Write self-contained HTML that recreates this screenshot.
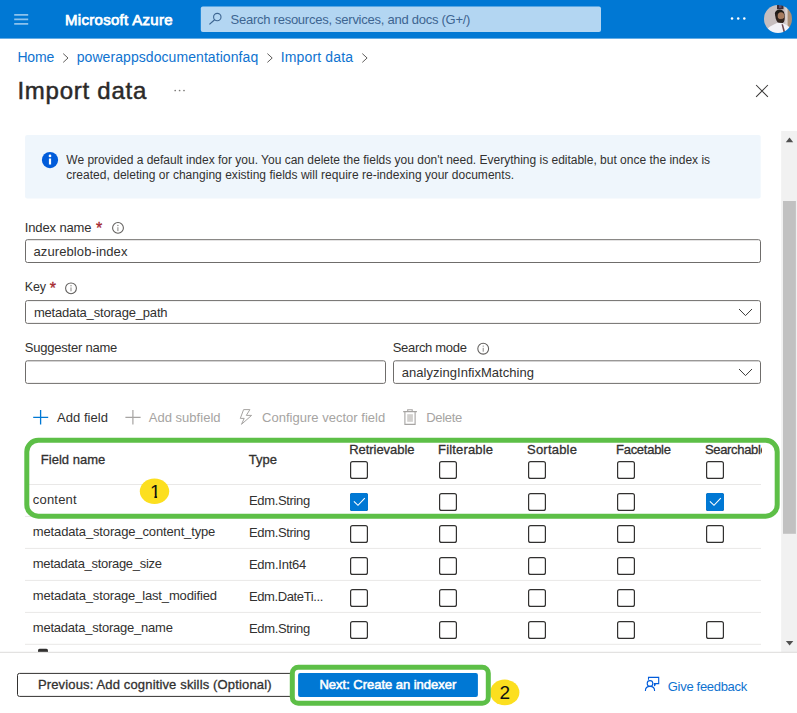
<!DOCTYPE html>
<html><head><meta charset="utf-8"><title>Import data - Microsoft Azure</title>
<style>
html,body{margin:0;padding:0;}
body{width:797px;height:713px;position:relative;overflow:hidden;background:#fff;font-family:"Liberation Sans",sans-serif;color:#323130;font-size:13px;}
.a{position:absolute;white-space:nowrap;line-height:1;}
.sb{-webkit-text-stroke:0.45px currentColor;}
svg{position:absolute;left:0;top:0;}
</style></head><body>

<!-- table row separators + partial next row -->
<svg width="797" height="713" viewBox="0 0 797 713">
<g stroke="#e9e8e7" stroke-width="1">
<path d="M25 484.5H761M25 516.4H761M25 548.4H761M25 580.4H761M25 612.4H761M25 644.3H761"/>
</g>
<path d="M38 652v-1.6q0-1.6 1.6-1.6h6.8q1.6 0 1.6 1.6v1.6z" fill="#323130"/>
</svg>

<!-- footer background -->
<div class="a" style="left:0;top:652px;width:797px;height:61px;background:#fff;"></div>

<svg width="797" height="713" viewBox="0 0 797 713">
<!-- top bar -->
<rect x="0" y="0" width="797" height="38.6" fill="#0078d4"/>
<path d="M14.2 14.8H28.2M14.2 19.3H28.2M14.2 23.8H28.2" stroke="#fff" stroke-width="1.8" opacity="0.55" fill="none"/>
<rect x="200.8" y="6.5" width="400.2" height="25.5" rx="2" fill="#b3d6f2"/>
<circle cx="217.3" cy="17.1" r="3.7" stroke="#3d6591" stroke-width="1.1" fill="none"/>
<path d="M214.6 19.8L209.4 24.4" stroke="#3d6591" stroke-width="1.2"/>
<g fill="#fff"><circle cx="732" cy="18.500" r="1.250"/><circle cx="738.200" cy="18.500" r="1.250"/><circle cx="744.300" cy="18.500" r="1.250"/></g>
<!-- avatar -->
<defs><clipPath id="av"><circle cx="778" cy="19" r="14"/></clipPath>
<filter id="bl" x="-10%" y="-10%" width="120%" height="120%"><feGaussianBlur stdDeviation="0.7"/></filter></defs>
<g clip-path="url(#av)"><g filter="url(#bl)">
<rect x="762" y="3" width="32" height="32" fill="#c6bebf"/>
<rect x="785.300" y="3" width="2.700" height="32" fill="#ddd3cf"/>
<rect x="787.600" y="3" width="6" height="32" fill="#a98f76"/>
<rect x="777" y="4" width="6.500" height="5.200" fill="#3a2b31"/>
<rect x="779" y="5" width="2.500" height="3" fill="#5a5070"/>
<path d="M765 34c1-5.500 5-8 12.500-11.300l6 .8c4.500 2 8 4.500 9.500 10.500z" fill="#f2f2f7"/>
<ellipse cx="779.600" cy="13.600" rx="4.700" ry="4.200" fill="#1f1a19"/>
<path d="M775.200 13.500c-.3 3.500.8 7 2.600 9l5.200 .6c1.600-1.700 2-5 1.500-9z" fill="#2a211f"/>
<ellipse cx="781" cy="16" rx="3.300" ry="3.800" fill="#a67c5e"/>
<path d="M777.300 17.500c1.800 2 4.800 2.200 7 .3l-.2 3.400c-1.800 2-4.600 1.900-6.400-.3z" fill="#33261f" opacity=".9"/>
<path d="M781.500 24.300l1.500 0 2.100 7.400-1.500 1z" fill="#6b4850"/>
</g></g>

<!-- breadcrumb chevrons -->
<g stroke="#605e5c" stroke-width="1" fill="none">
<path d="M63.2 53.6L68 58L63.2 62.4"/><path d="M267.4 53.6L272.2 58L267.4 62.4"/><path d="M362.3 53.6L367.1 58L362.3 62.4"/>
</g>
<!-- title dots, close -->
<g fill="#7a7876"><circle cx="175.2" cy="90.5" r="0.85"/><circle cx="179.6" cy="90.5" r="0.85"/><circle cx="184" cy="90.5" r="0.85"/></g>
<path d="M756.100 85L767.900 96.900M767.900 85L756.100 96.900" stroke="#3b3a39" stroke-width="1.050" fill="none"/>

<!-- scrollbar -->
<rect x="781.2" y="131" width="15.8" height="521" fill="#f1f1f1"/>
<rect x="783" y="201" width="12.9" height="332.8" fill="#c1c1c1"/>
<path d="M785.8 142.2L789.5 137.4L793.2 142.2z" fill="#505050"/>
<path d="M785.9 641L789.6 645.6L793.3 641z" fill="#505050"/>

<!-- info box -->
<rect x="25.1" y="135.1" width="735.6" height="63.5" rx="2" fill="#eff6fc"/>
<circle cx="50" cy="160.1" r="8.1" fill="#015cda"/>
<rect x="48.9" y="158.5" width="2.2" height="6" fill="#fff"/><circle cx="50" cy="155.900" r="1.35" fill="#fff"/>

<!-- required stars & info icons -->
<g stroke="#605e5c" stroke-width="1.050" fill="none"><circle cx="118" cy="227.900" r="5.400"/><circle cx="71" cy="288.300" r="5.400"/><circle cx="483.200" cy="348.700" r="5.400"/></g>
<g fill="#8a8886">
<rect x="117.4" y="227.2" width="1" height="3.9"/><circle cx="117.9" cy="225.5" r="0.7"/>
<rect x="70.5" y="287.4" width="1" height="3.9"/><circle cx="71" cy="285.7" r="0.7"/>
<rect x="482.7" y="347.8" width="1" height="3.9"/><circle cx="483.2" cy="346.1" r="0.7"/>
</g>

<!-- inputs -->
<g stroke="#6f6d6b" stroke-width="1" fill="#fff">
<rect x="25.5" y="239.7" width="735" height="22.8" rx="2"/>
<rect x="25.5" y="300.6" width="735" height="22.8" rx="2"/>
<rect x="25.5" y="360.8" width="360" height="22.6" rx="2"/>
<rect x="393.5" y="360.8" width="367" height="22.6" rx="2"/>
</g>
<g stroke="#3b3a39" stroke-width="1" fill="none">
<path d="M739 309L745.5 315.6L752 309"/><path d="M739 369L745.5 375.6L752 369"/>
</g>

<!-- toolbar icons -->
<path d="M40.6 410V424.6M33.2 417.3H48.2" stroke="#0078d4" stroke-width="1.3" fill="none"/>
<path d="M132.9 410V424.6M125.4 417.3H140.6" stroke="#a6a4a2" stroke-width="1.2" fill="none"/>
<path d="M243.6 409.6H249.9L246.3 415.4H251.6L241.5 424.3L244.2 418.4H240.3Z" stroke="#a6a4a2" stroke-width="1" fill="none" stroke-linejoin="round"/>
<g stroke="#a6a4a2" stroke-width="1.1" fill="none">
<path d="M403.2 411.6H416.9M407.7 411.4V409.7H412.2V411.4M404.9 411.6V424.4H415.1V411.6"/>
</g>
<rect x="407.2" y="414.2" width="5.7" height="7.6" fill="#d2d0ce"/>
</svg>

<!-- checkboxes -->
<svg width="797" height="713" viewBox="0 0 797 713">
<!-- footer line -->
<path d="M0 652.3H797" stroke="#dcdbda" stroke-width="1"/>
<!-- previous button -->
<rect x="17.5" y="673.4" width="276" height="23" rx="2" fill="none" stroke="#323130" stroke-width="1"/>
<!-- next button -->
<rect x="285" y="660" width="212" height="50" fill="#fff"/>
<path d="M285 673.4H292M285 696.4H292" stroke="#323130" stroke-width="1"/>
<rect x="298.1" y="673.1" width="179.8" height="23.9" rx="2" fill="#0078d4"/>
<g stroke="#323130" stroke-width="1.2" fill="#fff">
<rect x="350.6" y="461.6" width="16.8" height="16.8" rx="2"/>
<rect x="439.6" y="461.6" width="16.8" height="16.8" rx="2"/>
<rect x="528.6" y="461.6" width="16.8" height="16.8" rx="2"/>
<rect x="617.6" y="461.6" width="16.8" height="16.8" rx="2"/>
<rect x="706.6" y="461.6" width="16.8" height="16.8" rx="2"/>
<rect x="350.6" y="493.6" width="16.8" height="16.8" rx="2"/>
<rect x="439.6" y="493.6" width="16.8" height="16.8" rx="2"/>
<rect x="528.6" y="493.6" width="16.8" height="16.8" rx="2"/>
<rect x="617.6" y="493.6" width="16.8" height="16.8" rx="2"/>
<rect x="706.6" y="493.6" width="16.8" height="16.8" rx="2"/>
<rect x="350.6" y="525.6" width="16.8" height="16.8" rx="2"/>
<rect x="439.6" y="525.6" width="16.8" height="16.8" rx="2"/>
<rect x="528.6" y="525.6" width="16.8" height="16.8" rx="2"/>
<rect x="617.6" y="525.6" width="16.8" height="16.8" rx="2"/>
<rect x="706.6" y="525.6" width="16.8" height="16.8" rx="2"/>
<rect x="350.6" y="557.6" width="16.8" height="16.8" rx="2"/>
<rect x="439.6" y="557.6" width="16.8" height="16.8" rx="2"/>
<rect x="528.6" y="557.6" width="16.8" height="16.8" rx="2"/>
<rect x="617.6" y="557.6" width="16.8" height="16.8" rx="2"/>
<rect x="350.6" y="589.6" width="16.8" height="16.8" rx="2"/>
<rect x="439.6" y="589.6" width="16.8" height="16.8" rx="2"/>
<rect x="528.6" y="589.6" width="16.8" height="16.8" rx="2"/>
<rect x="617.6" y="589.6" width="16.8" height="16.8" rx="2"/>
<rect x="350.6" y="621.6" width="16.8" height="16.8" rx="2"/>
<rect x="439.6" y="621.6" width="16.8" height="16.8" rx="2"/>
<rect x="528.6" y="621.6" width="16.8" height="16.8" rx="2"/>
<rect x="617.6" y="621.6" width="16.8" height="16.8" rx="2"/>
<rect x="706.6" y="621.6" width="16.8" height="16.8" rx="2"/>
</g>
<g fill="#0078d4"><rect x="350" y="493" width="18" height="18" rx="2"/><rect x="706" y="493" width="18" height="18" rx="2"/></g>
<g stroke="#fff" stroke-width="1.1" fill="none"><path d="M353.9 501.3L358 505.3L364.8 498.2"/><path d="M709.9 501.3L714 505.3L720.8 498.2"/></g>
</svg>

<div class="a" style="left:65.0px;top:12.3px;font-size:15px;color:#fff;letter-spacing:0.296px;-webkit-text-stroke:0.75px currentColor;">Microsoft Azure</div>
<div class="a" style="left:230.6px;top:12.8px;font-size:13px;color:#3d6591;letter-spacing:-0.256px;">Search resources, services, and docs (G+/)</div>
<div class="a" style="left:17.4px;top:49.7px;font-size:14px;color:#0f73d0;letter-spacing:-0.190px;">Home</div>
<div class="a" style="left:76.7px;top:49.7px;font-size:14px;color:#0f73d0;letter-spacing:0.071px;">powerappsdocumentationfaq</div>
<div class="a" style="left:280.7px;top:49.7px;font-size:14px;color:#0f73d0;letter-spacing:0.146px;">Import data</div>
<div class="a" style="left:17.4px;top:78.8px;font-size:24px;color:#2b2a29;letter-spacing:0.753px;-webkit-text-stroke:0.5px currentColor;">Import data</div>
<div class="a" style="left:66.3px;top:154.3px;font-size:12px;color:#323130;letter-spacing:-0.006px;">We provided a default index for you. You can delete the fields you don't need. Everything is editable, but once the index is</div>
<div class="a" style="left:66.3px;top:168.9px;font-size:12px;color:#323130;letter-spacing:0.025px;">created, deleting or changing existing fields will require re-indexing your documents.</div>
<div class="a" style="left:24.7px;top:221.0px;font-size:13px;color:#323130;letter-spacing:-0.120px;">Index name</div>
<div class="a" style="left:33.5px;top:244.5px;font-size:13px;color:#323130;letter-spacing:0.103px;">azureblob-index</div>
<div class="a" style="left:24.8px;top:281.2px;font-size:12.5px;color:#323130;letter-spacing:-0.155px;">Key</div>
<div class="a" style="left:33.9px;top:305.7px;font-size:13px;color:#323130;letter-spacing:-0.184px;">metadata_storage_path</div>
<div class="a" style="left:24.7px;top:341.3px;font-size:13px;color:#323130;letter-spacing:-0.212px;">Suggester name</div>
<div class="a" style="left:392.7px;top:341.3px;font-size:13px;color:#323130;letter-spacing:-0.307px;">Search mode</div>
<div class="a" style="left:401.8px;top:365.7px;font-size:13px;color:#323130;letter-spacing:0.030px;">analyzingInfixMatching</div>
<div class="a" style="left:57.0px;top:410.8px;font-size:13px;color:#323130;letter-spacing:0.045px;">Add field</div>
<div class="a" style="left:148.8px;top:410.8px;font-size:13px;color:#a6a4a2;letter-spacing:0.017px;">Add subfield</div>
<div class="a" style="left:262.1px;top:410.8px;font-size:13px;color:#a6a4a2;letter-spacing:0.015px;">Configure vector field</div>
<div class="a" style="left:426.2px;top:410.8px;font-size:13px;color:#a6a4a2;letter-spacing:-0.285px;">Delete</div>
<div class="a" style="left:40.8px;top:452.8px;font-size:13px;color:#323130;letter-spacing:0.016px;-webkit-text-stroke:0.3px currentColor;">Field name</div>
<div class="a" style="left:248.8px;top:452.8px;font-size:13px;color:#323130;letter-spacing:-0.011px;-webkit-text-stroke:0.3px currentColor;">Type</div>
<div class="a" style="left:349.3px;top:442.8px;font-size:13px;color:#323130;letter-spacing:-0.061px;-webkit-text-stroke:0.3px currentColor;">Retrievable</div>
<div class="a" style="left:438.1px;top:442.8px;font-size:13px;color:#323130;letter-spacing:0.154px;-webkit-text-stroke:0.3px currentColor;">Filterable</div>
<div class="a" style="left:527.0px;top:442.8px;font-size:13px;color:#323130;letter-spacing:0.219px;-webkit-text-stroke:0.3px currentColor;">Sortable</div>
<div class="a" style="left:616.0px;top:442.8px;font-size:13px;color:#323130;letter-spacing:-0.267px;-webkit-text-stroke:0.3px currentColor;">Facetable</div>
<div class="a" style="left:705.0px;top:442.8px;font-size:13px;color:#323130;letter-spacing:-0.336px;width:56.9px;overflow:hidden;-webkit-text-stroke:0.3px currentColor;">Searchable</div>
<div class="a" style="left:32.8px;top:492.5px;font-size:13px;color:#323130;letter-spacing:0.200px;">content</div>
<div class="a" style="left:248.9px;top:493.6px;font-size:13px;color:#323130;letter-spacing:-0.329px;">Edm.String</div>
<div class="a" style="left:32.8px;top:524.5px;font-size:13px;color:#323130;letter-spacing:-0.140px;">metadata_storage_content_type</div>
<div class="a" style="left:248.9px;top:525.6px;font-size:13px;color:#323130;letter-spacing:-0.329px;">Edm.String</div>
<div class="a" style="left:32.8px;top:556.5px;font-size:13px;color:#323130;letter-spacing:-0.300px;">metadata_storage_size</div>
<div class="a" style="left:248.9px;top:557.5px;font-size:13px;color:#323130;letter-spacing:-0.226px;">Edm.Int64</div>
<div class="a" style="left:32.8px;top:588.5px;font-size:13px;color:#323130;letter-spacing:-0.154px;">metadata_storage_last_modified</div>
<div class="a" style="left:248.9px;top:589.6px;font-size:13px;color:#323130;letter-spacing:-0.377px;">Edm.DateTi...</div>
<div class="a" style="left:32.8px;top:620.5px;font-size:13px;color:#323130;letter-spacing:-0.220px;">metadata_storage_name</div>
<div class="a" style="left:248.9px;top:621.8px;font-size:13px;color:#323130;letter-spacing:-0.329px;">Edm.String</div>
<div class="a" style="left:37.9px;top:677.7px;font-size:13px;color:#323130;letter-spacing:0.151px;-webkit-text-stroke:0.3px currentColor;">Previous: Add cognitive skills (Optional)</div>
<div class="a" style="left:319.5px;top:677.8px;font-size:13px;color:#fff;letter-spacing:-0.025px;-webkit-text-stroke:0.55px currentColor;">Next: Create an indexer</div>
<div class="a" style="left:667.8px;top:679.8px;font-size:13px;color:#0f73d0;letter-spacing:-0.305px;">Give feedback</div>
<div class="a" style="left:96px;top:220.800px;font-size:16px;color:#a4262c;-webkit-text-stroke:0.3px #a4262c;">*</div>
<div class="a" style="left:49.800px;top:280.800px;font-size:16px;color:#a4262c;-webkit-text-stroke:0.3px #a4262c;">*</div>

<svg width="797" height="713" viewBox="0 0 797 713">
<!-- yellow markers -->
<ellipse cx="154.5" cy="491.3" rx="14.7" ry="12.8" fill="#fcdf1f"/>
<ellipse cx="504.8" cy="692.4" rx="14.6" ry="12.8" fill="#fcdf1f"/>
<!-- green highlights -->
<rect x="26.8" y="440.3" width="750.4" height="75.9" rx="11.5" fill="none" stroke="#5dbf47" stroke-width="5"/>
<rect x="292.3" y="667.3" width="196" height="35.9" rx="6" fill="none" stroke="#5dbf47" stroke-width="5"/>
<!-- feedback icon -->
<g stroke="#015cda" stroke-width="1.1" fill="none">
<circle cx="650" cy="683.4" r="2.8"/>
<path d="M645.4 690.900c0-2.700 2-4.500 4.600-4.500s4.600 1.800 4.600 4.500"/>
<path d="M648.500 679.700V677.400H658.700V683.600H655.600L654.500 686V683.600H653.800"/>
</g>
</svg>
<div class="a" style="left:140.700px;top:481.900px;width:29px;text-align:center;font-size:19px;color:#111;">1</div>
<div class="a" style="left:490.300px;top:683.200px;width:29px;text-align:center;font-size:19px;color:#111;">2</div>
<svg width="797" height="713" viewBox="0 0 797 713"><rect x="148" y="495.400" width="6.400" height="3.200" fill="#fcdf1f"/><rect x="157.100" y="495.400" width="6" height="3.200" fill="#fcdf1f"/></svg>
</body></html>
